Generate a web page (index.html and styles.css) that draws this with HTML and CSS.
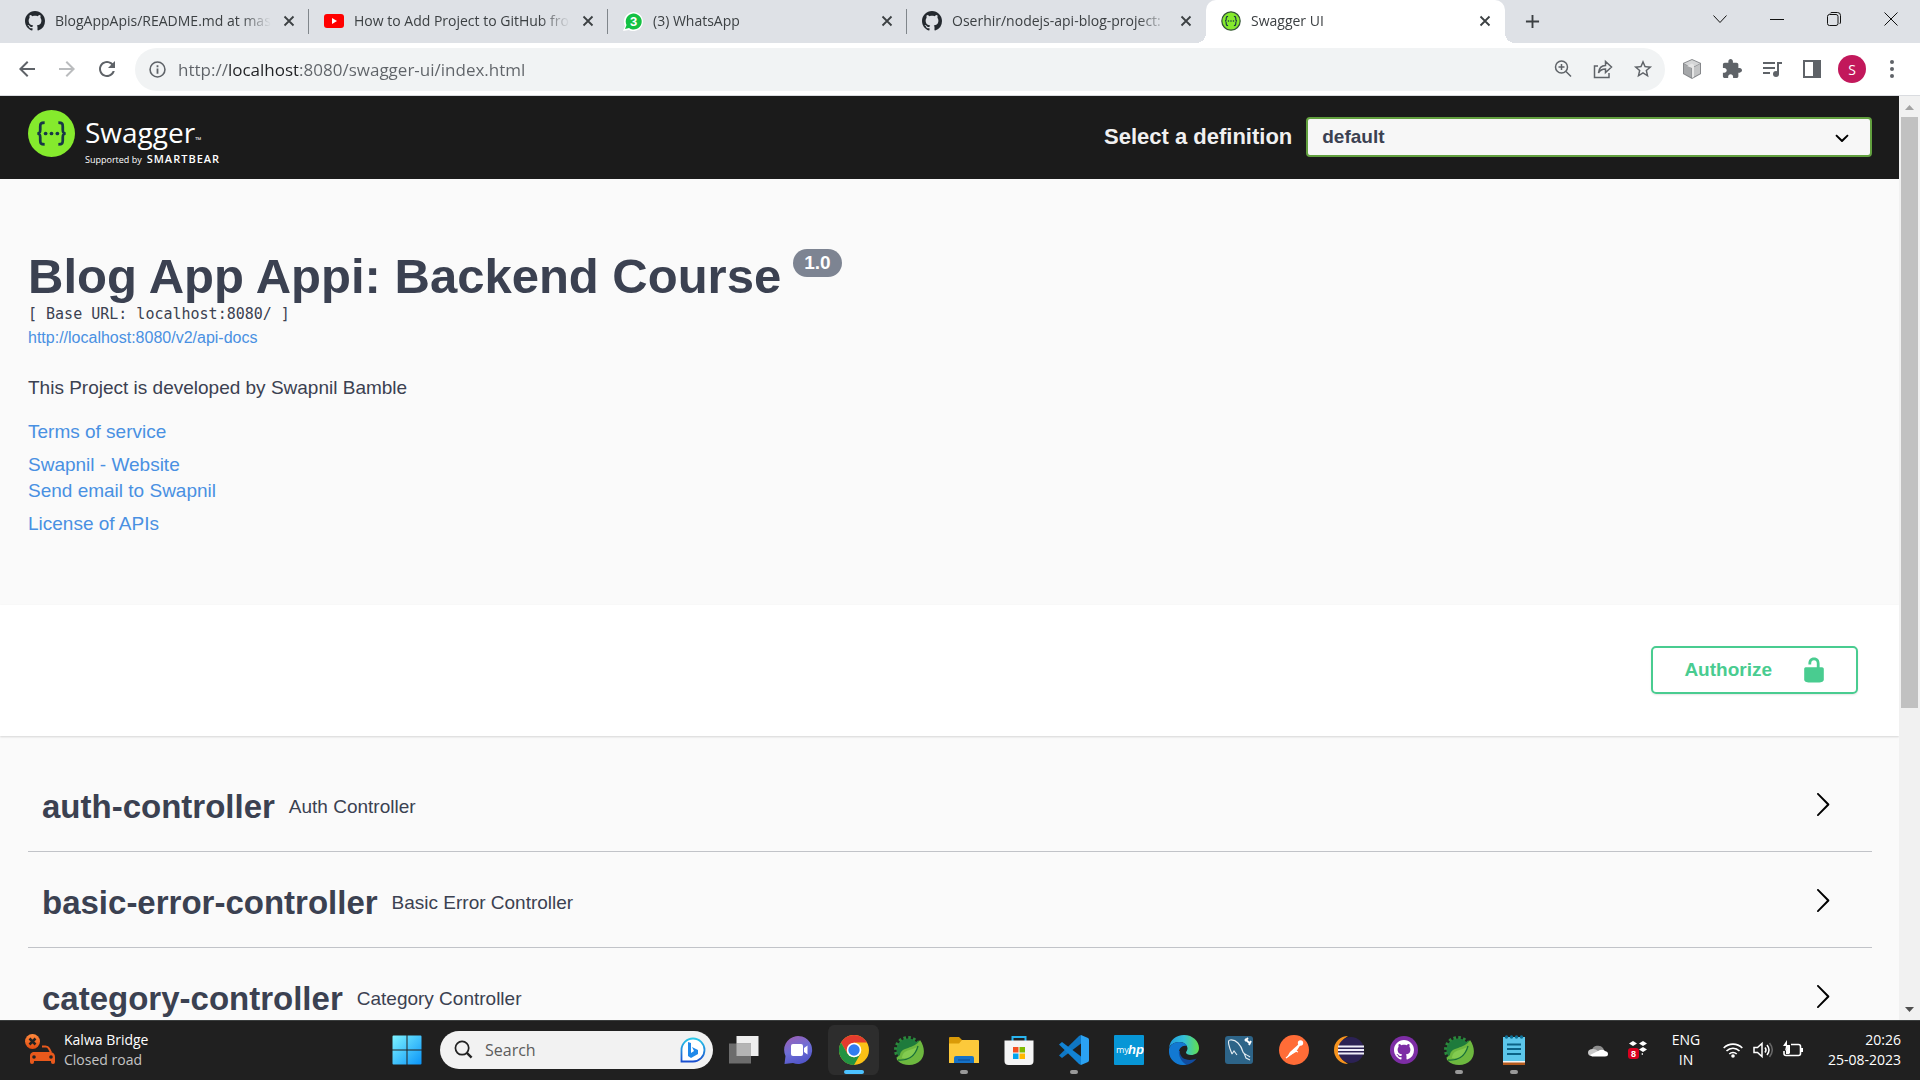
FILE: index.html
```html
<!DOCTYPE html>
<html lang="en">
<head>
<meta charset="utf-8">
<title>Swagger UI</title>
<link rel="stylesheet" href="styles.css">
</head>
<body>
<svg class="defs" aria-hidden="true">
  <symbol id="octocat" viewBox="0 0 16 16"><path d="M8 0C3.58 0 0 3.58 0 8c0 3.54 2.29 6.53 5.47 7.59.4.07.55-.17.55-.38 0-.19-.01-.82-.01-1.49-2.01.37-2.53-.49-2.69-.94-.09-.23-.48-.94-.82-1.13-.28-.15-.68-.52-.01-.53.63-.01 1.08.58 1.23.82.72 1.21 1.87.87 2.33.66.07-.52.28-.87.51-1.07-1.78-.2-3.64-.89-3.64-3.95 0-.87.31-1.59.82-2.15-.08-.2-.36-1.02.08-2.12 0 0 .67-.21 2.2.82.64-.18 1.32-.27 2-.27s1.36.09 2 .27c1.53-1.04 2.2-.82 2.2-.82.44 1.1.16 1.92.08 2.12.51.56.82 1.27.82 2.15 0 3.07-1.87 3.75-3.65 3.95.29.25.54.73.54 1.48 0 1.07-.01 1.93-.01 2.2 0 .21.15.46.55.38A8.01 8.01 0 0 0 16 8c0-4.42-3.58-8-8-8z"/></symbol>
  <symbol id="x" viewBox="0 0 12 12"><path d="M1.5 1.5l9 9M10.5 1.5l-9 9" fill="none" stroke="currentColor" stroke-width="1.8"/></symbol>
  <symbol id="braces" viewBox="0 0 48 48"><g fill="none" stroke="#173647" stroke-width="2.8"><path d="M17 13c-4 0-4.500 1-4.500 4v3c0 3-.5 4-3 4 2.500 0 3 1 3 4v3c0 3 .5 4 4.500 4M31 13c4 0 4.500 1 4.500 4v3c0 3 .5 4 3 4-2.500 0-3 1-3 4v3c0 3-.5 4-4.500 4"/></g><g fill="#173647"><circle cx="18" cy="24" r="1.900"/><circle cx="24" cy="24" r="1.900"/><circle cx="30" cy="24" r="1.900"/></g></symbol>
  <symbol id="arrow" viewBox="0 0 20 20"><path d="M13.250 10L6.109 2.580c-.268-.27-.268-.707 0-.979.268-.27.701-.27.969 0l7.830 7.908c.268.271.268.709 0 .979l-7.830 7.908c-.268.271-.701.27-.969 0-.268-.269-.268-.707 0-.979L13.250 10z"/></symbol>
  <symbol id="spring" viewBox="0 0 30 30">
    <circle cx="14" cy="15" r="11.500" fill="#1e7b3c"/><circle cx="14" cy="15" r="12.500" fill="none" stroke="#2b8a3c" stroke-width="3" stroke-dasharray="2.600 2.300"/>
    <path d="M26 5C31 12 31 20 27 25 21 32 9 31 4 26 1 23 4 22 6 20 7 11 20 15 26 5z" fill="#6db83f"/>
    <path d="M24 11C20 16 9 13 8 23c8 1 14-3 16-12z" fill="#82cb50"/><path d="M4 25c9 1 17-3 20-14" fill="none" stroke="#17703a" stroke-width="1.300"/>
  </symbol>
</svg>

<header class="tabstrip">
  <nav class="tabs" aria-label="Tabs">
    <div class="tab"><svg class="favicon dark"><use href="#octocat"/></svg><span class="tab-title">BlogAppApis/README.md at mas</span><button class="tab-close" aria-label="Close tab"><svg><use href="#x"/></svg></button></div>
    <div class="tab"><svg class="favicon" viewBox="0 0 20 20"><rect y="3" width="20" height="14" rx="3" fill="#f00"/><path d="M8 7l5 3-5 3z" fill="#fff"/></svg><span class="tab-title">How to Add Project to GitHub fro</span><button class="tab-close" aria-label="Close tab"><svg><use href="#x"/></svg></button></div>
    <div class="tab"><svg class="favicon" viewBox="0 0 20 20"><path d="M0 20l2-5A9.500 9.500 0 1 1 6 19z" fill="#fff"/><path d="M2 18l1.500-4A8 8 0 1 1 6 17z" fill="#13c143"/><text x="10.500" y="15" text-anchor="middle" class="badge-num">3</text></svg><span class="tab-title">(3) WhatsApp</span><button class="tab-close" aria-label="Close tab"><svg><use href="#x"/></svg></button></div>
    <div class="tab before-active"><svg class="favicon dark"><use href="#octocat"/></svg><span class="tab-title">Oserhir/nodejs-api-blog-project:</span><button class="tab-close" aria-label="Close tab"><svg><use href="#x"/></svg></button></div>
    <div class="tab active"><svg class="favicon" viewBox="0 0 48 48"><circle cx="24" cy="24" r="22" fill="#85ea2d" stroke="#35543a" stroke-width="3"/><use href="#braces"/></svg><span class="tab-title">Swagger UI</span><button class="tab-close" aria-label="Close tab"><svg><use href="#x"/></svg></button></div>
  </nav>
  <button class="new-tab" aria-label="New tab"><svg viewBox="0 0 16 16"><path d="M8 1v14M1 8h14" stroke="#3c4043" stroke-width="2"/></svg></button>
  <div class="window-controls">
    <button aria-label="Search tabs"><svg viewBox="0 0 14 14"><path d="M.5 3.500L7 10.500l6.500-7"/></svg></button>
    <button aria-label="Minimise"><svg viewBox="0 0 14 14"><path d="M0 7.500h14"/></svg></button>
    <button aria-label="Restore"><svg viewBox="0 0 14 14"><rect x=".5" y="2.500" width="10.500" height="11" rx="2"/><path d="M3 1.500Q3.500.5 5 .5h5.500q3 0 3 3V10q0 1.500-1 2"/></svg></button>
    <button aria-label="Close"><svg viewBox="0 0 14 14"><path d="M.5.5l13 13M13.500.5l-13 13"/></svg></button>
  </div>
</header>

<div class="toolbar">
  <div class="nav-buttons">
    <button aria-label="Back"><svg viewBox="0 0 24 24"><path fill="#5f6368" d="M20 11H7.830l5.590-5.590L12 4l-8 8 8 8 1.410-1.410L7.830 13H20v-2z"/></svg></button>
    <button aria-label="Forward"><svg viewBox="0 0 24 24"><path fill="#babcbe" d="M12 4l-1.410 1.410L16.170 11H4v2h12.170l-5.580 5.590L12 20l8-8z"/></svg></button>
    <button aria-label="Reload"><svg viewBox="0 0 24 24"><path fill="#5f6368" d="M17.650 6.350C16.200 4.900 14.210 4 12 4c-4.420 0-7.990 3.580-7.990 8s3.570 8 7.990 8c3.730 0 6.840-2.550 7.730-6h-2.080c-.82 2.330-3.040 4-5.650 4-3.310 0-6-2.690-6-6s2.690-6 6-6c1.660 0 3.140.69 4.220 1.780L13 11h7V4l-2.350 2.350z"/></svg></button>
  </div>
  <div class="omnibox">
    <svg class="info-icon" viewBox="0 0 16 16"><circle cx="8" cy="8" r="7" fill="none" stroke="#5f6368" stroke-width="1.500"/><path d="M8 7v5M8 4v1.800" stroke="#5f6368" stroke-width="1.700"/></svg>
    <input class="url" type="text" aria-label="Address" value="http://localhost:8080/swagger-ui/index.html">
    <button aria-label="Zoom"><svg viewBox="0 0 20 20" class="line"><circle cx="8.500" cy="8" r="6"/><path d="M13 12.500l5 5M8.500 5v6M5.500 8h6"/></svg></button>
    <button aria-label="Share"><svg viewBox="0 0 20 20" class="line"><path d="M5 7H1.500v11.500H16V14M5.500 14c.5-5 3-7.500 7-7.500V2.500l6 5.500-6 5.500V10c-3 0-5.500 1-7 4z"/></svg></button>
    <button aria-label="Bookmark"><svg viewBox="1 1 22 22"><path fill="#5f6368" d="M22 9.240l-7.190-.62L12 2 9.190 8.630 2 9.240l5.460 4.730L5.820 21 12 17.270 18.180 21l-1.630-7.030L22 9.240zM12 15.400l-3.760 2.270 1-4.280-3.320-2.880 4.380-.38L12 6.100l1.710 4.040 4.380.38-3.320 2.880 1 4.280L12 15.400z"/></svg></button>
  </div>
  <div class="extensions">
    <button aria-label="Cube extension"><svg viewBox="0 0 20 20"><path d="M10 0l9 4v11l-9 5-9-5V4z" fill="#85878a"/><path d="M10 1l8 3.500-8 4-8-4z" fill="#d5d6d7"/><path d="M2 5l7.500 4v9.500L2 14.500z" fill="#a5a7a9"/><path d="M10.500 9L18 5v9.500l-7.500 4z" fill="#c3c4c5"/><path d="M5 7l5-2.500L12 6v12l-2 1V9z" fill="#e6e6e6"/></svg></button>
    <button aria-label="Extensions"><svg viewBox="1 1 22 22"><path fill="#5f6368" d="M20.500 11H19V7c0-1.100-.9-2-2-2h-4V3.500C13 2.120 11.880 1 10.500 1S8 2.120 8 3.500V5H4c-1.100 0-1.990.9-1.990 2v3.800H3.500c1.490 0 2.700 1.210 2.700 2.700s-1.210 2.700-2.700 2.700H2V20c0 1.100.9 2 2 2h3.800v-1.500c0-1.490 1.210-2.700 2.700-2.700 1.490 0 2.700 1.210 2.700 2.700V22H17c1.100 0 2-.9 2-2v-4h1.500c1.380 0 2.500-1.120 2.500-2.500S21.880 11 20.500 11z"/></svg></button>
    <button aria-label="Media controls"><svg viewBox="0 0 20 20"><path d="M1 4h12M1 9h12M1 14h7M16 15V4h4" fill="none" stroke="#5f6368" stroke-width="2"/><circle cx="14" cy="15" r="3" fill="#5f6368"/></svg></button>
    <button aria-label="Side panel"><svg viewBox="0 0 20 20"><path fill="#5f6368" d="M1 1h18v18H1zM3 3v14h8V3z" fill-rule="evenodd"/></svg></button>
    <button class="avatar" aria-label="Profile">S</button>
    <button aria-label="Menu"><svg viewBox="0 0 20 20" fill="#5f6368"><circle cx="10" cy="3" r="2"/><circle cx="10" cy="10" r="2"/><circle cx="10" cy="17" r="2"/></svg></button>
  </div>
</div>

<div class="viewport">
  <main class="page">
    <div class="topbar">
      <a class="logo" href="#">
        <svg class="logo-mark" viewBox="0 0 48 48"><circle cx="24" cy="24" r="24" fill="#85ea2d"/><use href="#braces"/></svg>
        <span class="logo-text"><span class="logo-name">Swagger<span class="tm">™</span></span><span class="logo-by"><span>Supported by</span><b>SMARTBEAR</b></span></span>
      </a>
      <form class="definition">
        <label for="definition">Select a definition</label>
        <span class="select-wrap"><select id="definition"><option>default</option></select><svg class="select-arrow" viewBox="0 0 20 20"><path d="M13.418 7.859c.271-.268.709-.268.978 0 .27.268.272.701 0 .969l-3.908 3.830c-.27.268-.707.268-.979 0l-3.908-3.830c-.27-.267-.27-.701 0-.969.271-.268.709-.268.978 0L10 11l3.418-3.141z"/></svg></span>
      </form>
    </div>

    <section class="info">
      <h1>Blog App Appi: Backend Course<span class="version">1.0</span></h1>
      <pre class="base-url">[ Base URL: localhost:8080/ ]</pre>
      <a class="docs-link" href="#">http://localhost:8080/v2/api-docs</a>
      <p class="description">This Project is developed by Swapnil Bamble</p>
      <a href="#">Terms of service</a>
      <div class="contact"><a href="#">Swapnil - Website</a><a href="#">Send email to Swapnil</a></div>
      <a href="#">License of APIs</a>
    </section>

    <section class="auth"><button class="authorize"><span>Authorize</span><svg viewBox="0 0 20 20"><path d="M15.800 8H14V5.600C14 2.703 12.665 1 10 1 7.334 1 6 2.703 6 5.600V6h2v-.801C8 3.754 8.797 3 10 3c1.203 0 2 .754 2 2.199V8H4c-.553 0-1 .646-1 1.199V17c0 .549.428 1.139.951 1.307l1.197.387C5.672 18.861 6.550 19 7.100 19h5.800c.549 0 1.428-.139 1.951-.307l1.196-.387c.524-.167.953-.757.953-1.306V9.199C17 8.646 16.352 8 15.800 8z"/></svg></button></section>

    <section class="tags">
      <div class="tag"><h2>auth-controller</h2><p>Auth Controller</p><button aria-label="Expand auth-controller"><svg><use href="#arrow"/></svg></button></div>
      <div class="tag"><h2>basic-error-controller</h2><p>Basic Error Controller</p><button aria-label="Expand basic-error-controller"><svg><use href="#arrow"/></svg></button></div>
      <div class="tag"><h2>category-controller</h2><p>Category Controller</p><button aria-label="Expand category-controller"><svg><use href="#arrow"/></svg></button></div>
    </section>
  </main>
  <div class="scrollbar" aria-hidden="true">
    <svg viewBox="0 0 21 21"><path d="M6 14l4.500-5 4.500 5z" fill="#a3a3a3"/></svg>
    <div class="track"><div class="thumb"></div></div>
    <svg viewBox="0 0 21 21"><path d="M6 8l4.500 5L15 8z" fill="#505050"/></svg>
  </div>
</div>

<footer class="taskbar">
  <div class="news">
    <svg viewBox="0 0 30 30"><defs><linearGradient id="or" x2="0" y2="1"><stop stop-color="#ff8a3d"/><stop offset="1" stop-color="#e04a10"/></linearGradient></defs><circle cx="7.500" cy="7.500" r="7.500" fill="url(#or)"/><path d="M4.500 4.500l6 6M10.500 4.500l-6 6" stroke="#222" stroke-width="2.500"/><path d="M17 12.500h3.500q2.500 0 3.500 2l2 4" fill="none" stroke="#e9591c" stroke-width="2"/><path d="M8 18h18q4 1 4 5v5q0 2-2 2t-2-2v-1H9v1q0 2-2 2t-2-2v-6q0-3 3-4z" fill="#e9591c"/><circle cx="9" cy="23" r="1.800" fill="#222"/><circle cx="26" cy="23" r="1.800" fill="#222"/></svg>
    <div class="news-text"><span>Kalwa Bridge</span><span class="muted">Closed road</span></div>
  </div>
  <nav class="apps" aria-label="Taskbar">
    <button aria-label="Start"><svg viewBox="0 0 30 30"><defs><linearGradient id="wn" x2="1" y2="1"><stop stop-color="#7df3ff"/><stop offset="1" stop-color="#0a94f8"/></linearGradient></defs><path fill="url(#wn)" d="M.5 1.500q0-1 1-1h13v14H.5zM15.500.5h13q1 0 1 1v13h-14zM.5 15.500h14v14h-13q-1 0-1-1zM15.500 15.500h14v13q0 1-1 1h-13z"/></svg></button>
    <div class="search">
      <svg viewBox="0 0 20 20"><circle cx="8.500" cy="8.500" r="7" fill="none" stroke="#222" stroke-width="1.800"/><path d="M13.500 13.500l5 5" stroke="#222" stroke-width="2.500"/></svg>
      <input type="search" placeholder="Search" aria-label="Search">
      <svg class="bing" viewBox="0 0 26 26"><defs><linearGradient id="bg" x2="0" y2="1"><stop stop-color="#2ac8e8"/><stop offset="1" stop-color="#1a4fd0"/></linearGradient></defs><path d="M1.500 24.500V13A11.500 11.500 0 1 1 13 24.500z" fill="#fff" stroke="url(#bg)" stroke-width="1.800"/><path d="M8 5l3 1v10l3-2-2-4 6 3v4l-7 4-3-2z" fill="#2089ea"/></svg>
    </div>
    <button aria-label="Task view"><svg viewBox="0 0 30 30"><rect x="7.500" y="1" width="22" height="20" fill="#eee"/><rect y="8.500" width="22" height="20" fill="#6c6c6c"/><rect x="7.500" y="8.500" width="14.500" height="12.500" fill="#b4b4b4"/></svg></button>
    <button aria-label="Chat"><svg viewBox="0 0 30 30"><defs><linearGradient id="ch" x1=".2" x2=".6" y2="1"><stop stop-color="#9a5fb5"/><stop offset=".5" stop-color="#6f6fd6"/><stop offset="1" stop-color="#5054c8"/></linearGradient></defs><path d="M.5 29l1-8A14 14 0 1 1 9 28z" fill="url(#ch)"/><rect x="7" y="9" width="12" height="12" rx="2" fill="#fff"/><path d="M20 13l3.500-2.500v9L20 17z" fill="#fff"/></svg></button>
    <button class="current" aria-label="Chrome"><svg viewBox="0 0 30 30"><circle cx="15" cy="15" r="15" fill="#fbc116"/><path d="M15 0a15 15 0 0 1 13 7.500H15L8.500 18.700 2 7.500A15 15 0 0 1 15 0z" fill="#e33b2e"/><path d="M2 7.500A15 15 0 0 0 15 30l6.500-11.300-6.500 3.800-6.500-3.800z" fill="#229342"/><circle cx="15" cy="15" r="7.300" fill="#fff"/><circle cx="15" cy="15" r="5.700" fill="#2f7cf0"/></svg></button>
    <button aria-label="Spring Tool Suite"><svg><use href="#spring"/></svg></button>
    <button class="running" aria-label="File Explorer"><svg viewBox="0 0 30 30"><path d="M0 3q0-1 1-1h9l3 3v4H0z" fill="#d99a08"/><path d="M0 8.500h10L13 5h16q1 0 1 1v22H0z" fill="#fcc93b"/><path d="M5 28v-5q0-2 2-2h16q2 0 2 2v5z" fill="#1572c8"/><path d="M9 25h12" stroke="#0c4f99" stroke-width="1.200"/></svg></button>
    <button aria-label="Microsoft Store"><svg viewBox="0 0 30 30"><path d="M8.500 6V2h13v4" fill="none" stroke="#29b5f0" stroke-width="2"/><path d="M.5 5.500h29V26q0 4-4 4h-21q-4 0-4-4z" fill="#f5f5f5"/><path d="M9 12h5.500v5.500H9z" fill="#f25022"/><path d="M15.500 12H21v5.500h-5.500z" fill="#7fba00"/><path d="M9 18.500h5.500V24H9z" fill="#00a4ef"/><path d="M15.500 18.500H21V24h-5.500z" fill="#ffb900"/></svg></button>
    <button class="running" aria-label="Visual Studio Code"><svg viewBox="0 0 30 30"><path d="M22 0v8.500L3 23l-3-2.500L20 1z" fill="#0f77c4"/><path d="M22 30v-8.500L3 7 0 9.500 20 29z" fill="#1283d4"/><path d="M22 0l7 3q1 .5 1 2v20q0 1.500-1 2l-7 3z" fill="#2ba2f2"/></svg></button>
    <button aria-label="myHP"><svg viewBox="0 0 30 30"><rect width="30" height="30" rx="1" fill="#0796d6"/><text x="2" y="18" class="hp-my">my</text><text x="14" y="19" class="hp-hp">hp</text></svg></button>
    <button aria-label="Edge"><svg viewBox="0 0 30 30"><defs><linearGradient id="ed"><stop stop-color="#1f9de0"/><stop offset=".5" stop-color="#34c0d8"/><stop offset="1" stop-color="#63e04c"/></linearGradient></defs><path d="M0 15A15 15 0 0 0 15 30c6 0 10-3 12.500-6.500C20 27 10 24 11 16z" fill="#114c9f"/><path d="M0 13C1 5 7 0 15 0c9 0 15 6.500 15 13 0 5-4 7-8 7-3 0-5-1-5-2.500 0-1 1.500-2 1.500-4C18.500 10 15 7 11 7 5 7 1 10 0 13z" fill="url(#ed)"/><path d="M0 14c1-4 5-7 10-7 4 0 7 1.500 8 4-5-1.500-9 3-8 8 1 6 5 10 8 10.500C8 32-1 25 0 14z" fill="#1279d2"/></svg></button>
    <button aria-label="MySQL Workbench"><svg viewBox="0 0 30 30"><rect x="1" y="1" width="28" height="28" rx="3" fill="#2d6488"/><path d="M8 19C5 12 3 5 6 5c6-1 11 5 13 12 0 2 5 3 7 5M8 19l2-3 3 4M20 18l2 5 4 2" fill="none" stroke="#e5edf2" stroke-width="1.100"/><path d="M21 4l5 4.500M24 3l-3 3M27 6l-2 4" stroke="#fff" stroke-width="1.800"/></svg></button>
    <button aria-label="Postman"><svg viewBox="0 0 30 30"><circle cx="15" cy="15" r="15" fill="#ff6c37"/><path d="M21 8L11 17l-3 5 9-5 5-8z" fill="#fff"/><circle cx="21.500" cy="8" r="2.700" fill="#fff"/><path d="M7 23l8-6M14 15l5 2" stroke="#fff" stroke-width="1.300"/></svg></button>
    <button aria-label="Eclipse"><svg viewBox="0 0 30 30"><path d="M14 1A14 14 0 0 0 14 29 16 16 0 0 1 14 1z" fill="#f7941e"/><circle cx="17" cy="15" r="13" fill="#2c2255"/><path d="M4 11.500h26M4 15h26M4 18.500h26" stroke="#f0eefa" stroke-width="1.800"/></svg></button>
    <button aria-label="GitHub Desktop"><svg viewBox="0 0 30 30"><circle cx="15" cy="15" r="14" fill="#7d2da5"/><svg x="5" y="5" width="20" height="20" fill="#fff"><use href="#octocat"/></svg></svg></button>
    <button class="running" aria-label="Spring Tool Suite 4"><svg><use href="#spring"/></svg></button>
    <button class="running" aria-label="Notepad"><svg viewBox="0 0 30 30"><rect x="4" y="26" width="22" height="4" fill="#b45a1d"/><rect x="4" y="25" width="22" height="2.500" fill="#f3f3f3"/><rect x="4" y="2" width="22" height="24" fill="#5cc6ea"/><path d="M8 9.500h14M8 14h14M8 19h14" stroke="#0b6286" stroke-width="1.800"/><g fill="#0e7095"><circle cx="7.500" cy="2" r="1.700"/><circle cx="12.500" cy="2" r="1.700"/><circle cx="17.500" cy="2" r="1.700"/><circle cx="22.500" cy="2" r="1.700"/></g></svg></button>
  </nav>
  <div class="tray">
    <svg class="cloud" viewBox="0 0 20 20"><path d="M4 10a6 5 0 0 1 11-2l2 4H3z" fill="#8d8d8d"/><path d="M4 16q-4 0-4-3.500T5 9q3 0 5 2l4 5z" fill="#c9c9c9"/><path d="M2 15l10-5q3-1 5 1 3 .5 3 3t-3 2.500H4z" fill="#fff"/></svg>
    <svg class="dropbox" viewBox="0 0 20 20"><path fill="#fff" d="M5 1l4 2.500L5 6 1 3.500zM15 1l4 2.500L15 6l-4-2.500zM15 7l4 2.500-4 2.500-4-2.500zM13 14l2-1v2z"/><rect y="8" width="11" height="11" rx="3" fill="#d9001f"/><text x="5.500" y="17" text-anchor="middle" class="badge-num small">8</text></svg>
    <div class="lang"><span>ENG</span><span>IN</span></div>
    <svg class="status" viewBox="0 0 20 20"><g fill="none" stroke="#fff" stroke-width="1.600"><path d="M.7 8a13 13 0 0 1 18.600 0M3.500 11a9 9 0 0 1 13 0M6.300 14a5.200 5.200 0 0 1 7.400 0"/></g><circle cx="10" cy="16" r="1.800" fill="#fff"/></svg>
    <svg class="status" viewBox="0 0 20 20"><g fill="none" stroke="#fff" stroke-width="1.500"><path d="M1 7.500h3.500L9 3.500v13l-4.500-4H1zM12 7.500q2 2.500 0 5M14 5q4 5 0 10"/><path d="M16.500 3q5.500 7 0 14" stroke="#666"/></g></svg>
    <svg class="status" viewBox="0 0 20 20"><path d="M8 4.500h7.500q2 0 2 2v7q0 2-2 2H3q-2 0-2-2V11" fill="none" stroke="#fff" stroke-width="1.600"/><path d="M18 8h2v4h-2zM3 14v-4l4-5v8l-1 1zM4 0L0 6h3L2 11l5-6H4z" fill="#fff"/></svg>
    <div class="clock"><span>20:26</span><span>25-08-2023</span></div>
  </div>
</footer>
</body>
</html>
```
FILE: styles.css
```css
* { box-sizing: border-box; }

body {
  margin: 0;
  height: 100vh;
  display: grid;
  grid-template-rows: 43px 53px minmax(0, 1fr) 60px;
  overflow: hidden;
  background: #fafafa;
  color: #3b4151;
  font-family: "Liberation Sans", Arial, sans-serif;
}

button { border: 0; padding: 0; background: none; font: inherit; color: inherit; }
input { border: 0; outline: 0; padding: 0; background: none; font: inherit; min-width: 0; }
h1, h2, p, pre { margin: 0; }
svg { display: block; flex: none; }
.defs { position: absolute; width: 0; height: 0; }

.tabstrip, .toolbar, .taskbar { font-family: "Open Sans", "Noto Sans", sans-serif; }

/* Tab strip */
.tabstrip { display: flex; align-items: stretch; background: #dee1e6; padding: 0 1px 0 10px; }
.tabs { display: flex; flex: 0 1 1495px; min-width: 0; }
.tab {
  flex: 1 1 0;
  min-width: 0;
  display: flex;
  align-items: center;
  gap: 10px;
  padding: 0 12px 1px 15px;
  background: linear-gradient(#80868b, #80868b) right 9px / 1px 25px no-repeat;
  background-position: right 9px;
}
.tab.before-active { background: none; border-radius: 0 0 8px 0; }
.tab.active { position: relative; background: #fff; border-radius: 10px 10px 0 0; }
.tab.active::before, .tab.active::after {
  content: "";
  position: absolute;
  bottom: 0;
  width: 10px;
  height: 10px;
}
.tab.active::before { left: -10px; background: radial-gradient(circle at 0 0, transparent 10px, #fff 10px); }
.tab.active::after { right: -10px; background: radial-gradient(circle at 100% 0, transparent 10px, #fff 10px); }
.favicon { width: 20px; height: 20px; }
.favicon.dark { fill: #24292f; }
.tab-title {
  flex: 1;
  overflow: hidden;
  white-space: nowrap;
  font-size: 14px;
  line-height: 20px;
  color: #3c4043;
  mask-image: linear-gradient(to right, #000 calc(100% - 30px), transparent);
}
.tab-close { width: 16px; height: 20px; display: grid; place-items: center; color: #3c4043; }
.tab-close svg { width: 12px; height: 12px; }
.badge-num { font: bold 13px "Liberation Sans", sans-serif; fill: #fff; }
.badge-num.small { font-size: 9px; }
.new-tab { width: 54px; display: grid; place-items: center; }
.new-tab svg { width: 15px; height: 15px; }
.window-controls { display: flex; margin-left: auto; }
.window-controls button { width: 57px; height: 37px; display: grid; place-items: center; }
.window-controls svg { width: 14px; height: 14px; fill: none; stroke: #111; }

/* Toolbar */
.toolbar {
  display: flex;
  align-items: center;
  background: #fff;
  border-bottom: 1px solid #dadce0;
  padding: 0 8px 0 7px;
}
.nav-buttons { display: flex; margin-right: 8px; }
.nav-buttons button { width: 40px; height: 40px; display: grid; place-items: center; }
.nav-buttons svg { width: 24px; height: 24px; }
.omnibox {
  flex: 1;
  min-width: 0;
  height: 43px;
  display: flex;
  align-items: center;
  border-radius: 22px;
  background: #f1f3f4;
  padding: 0 2px 0 14px;
}
.info-icon { width: 17px; height: 17px; }
.url {
  flex: 1;
  height: 32px;
  margin-left: 12px;
  font-size: 17px;
  background: linear-gradient(to right, #5f6368 51px, #202124 51px 120px, #5f6368 120px);
  background-clip: text;
  -webkit-text-fill-color: transparent;
}
.omnibox button, .extensions button { width: 40px; height: 40px; display: grid; place-items: center; }
.omnibox button svg, .extensions svg { width: 20px; height: 20px; }
.line { fill: none; stroke: #5f6368; stroke-width: 1.5px; }
.extensions { display: flex; align-items: center; margin-left: 7px; }
.extensions .avatar {
  width: 28px;
  height: 28px;
  margin: 0 6px;
  border-radius: 50%;
  background: #c2185b;
  color: #fff;
  font-size: 14px;
}

/* Document viewport */
.viewport { display: flex; min-height: 0; }
.page { flex: 1; min-width: 0; overflow: hidden; }
.scrollbar { width: 21px; display: flex; flex-direction: column; background: #f1f1f1; }
.scrollbar svg { width: 21px; height: 21px; }
.track { flex: 1; padding: 0 2px; }
.thumb { height: 67%; background: #c1c1c1; }

.topbar {
  display: flex;
  align-items: center;
  justify-content: space-between;
  height: 83px;
  padding: 0 27px 2px 28px;
  background: #1b1b1b;
}
.logo { display: flex; align-self: flex-start; gap: 10px; padding-top: 14px; color: #fff; text-decoration: none; font-family: "Open Sans", sans-serif; }
.logo-mark { width: 47px; height: 47px; }
.logo-text { display: flex; flex-direction: column; padding-top: 7px; }
.logo-name { height: 36px; font-size: 28px; line-height: 30px; }
.tm { font-size: 8px; }
.logo-by { display: flex; align-items: baseline; gap: 5px; font-size: 9px; line-height: 12px; }
.logo-by b { font-size: 11px; font-weight: 600; letter-spacing: 1px; }
.definition { display: flex; align-items: center; gap: 14px; flex: 0 1 768px; }
.definition label { font-size: 22px; font-weight: bold; color: #f0f0f0; white-space: nowrap; }
.select-wrap { position: relative; flex: 1; }
.select-wrap select {
  appearance: none;
  display: block;
  width: 100%;
  height: 40px;
  padding: 0 14px 1px;
  border: 2px solid #62a03f;
  border-radius: 4px;
  background: #f7f7f7;
  color: #3b4151;
  font: bold 19px "Liberation Sans", Arial, sans-serif;
}
.select-arrow { position: absolute; right: 16px; top: 7px; width: 28px; height: 28px; pointer-events: none; }

.info {
  display: flex;
  flex-direction: column;
  align-items: flex-start;
  padding: 69px 28px 68px;
  font-size: 19px;
  line-height: 26px;
}
.info a { color: #4990e2; text-decoration: none; }
.info h1 { display: flex; align-items: flex-start; gap: 12px; font-size: 49px; line-height: 56px; }
.version {
  margin-top: 1px;
  padding: 0 11px;
  border-radius: 14px;
  background: #7d8492;
  color: #fff;
  font-size: 19px;
  line-height: 28px;
}
.base-url { font: 15px/21px "DejaVu Sans Mono", monospace; }
.info .docs-link { font-size: 16px; }
.description { margin: 24px 0 18px; }
.contact { display: flex; flex-direction: column; margin: 7px 0; }

.auth {
  display: flex;
  justify-content: flex-end;
  padding: 41px 41px 42px;
  background: #fff;
  box-shadow: 0 1px 2px rgba(0, 0, 0, .15);
}
.authorize {
  display: flex;
  align-items: center;
  gap: 28px;
  height: 48px;
  padding: 0 28px 1px 31px;
  border: 2px solid #49cc90;
  border-radius: 5px;
  box-shadow: 0 1px 2px rgba(0, 0, 0, .1);
  color: #49cc90;
  font-size: 19px;
  font-weight: bold;
}
.authorize svg { width: 28px; height: 28px; fill: #49cc90; }

.tags { padding: 20px 27px 0 28px; }
.tag {
  display: flex;
  align-items: center;
  gap: 14px;
  height: 96px;
  padding: 2px 36px 0 14px;
  border-bottom: 1px solid #c1c3c8;
}
.tag h2 { font-size: 33px; line-height: 40px; padding-top: 4px; }
.tag p { flex: 1; font-size: 19px; line-height: 24px; padding-top: 4px; }
.tag svg { width: 27px; height: 27px; fill: #000; }

/* Taskbar */
.taskbar {
  display: grid;
  grid-template-columns: 379px minmax(0, 1fr) auto;
  align-items: center;
  padding-bottom: 1px;
  background: #202020;
  box-shadow: inset 0 1px #3a3d3d;
  color: #fff;
  font-size: 14px;
  line-height: 20px;
}
.news { display: flex; gap: 9px; padding-left: 25px; }
.news svg { width: 30px; height: 30px; margin-top: 4px; }
.news-text, .lang, .clock { display: flex; flex-direction: column; }
.muted { color: #c4c4c4; }
.apps { display: flex; align-items: center; }
.apps button { position: relative; width: 55px; height: 50px; display: grid; place-items: center; }
.apps button > svg { width: 30px; height: 30px; }
.apps button.current { background: #2d2d2d; background-clip: content-box; padding: 0 2px; border-radius: 8px; }
.current::after, .running::after {
  content: "";
  position: absolute;
  bottom: 1px;
  left: 50%;
  width: 8px;
  height: 4px;
  margin-left: -4px;
  border-radius: 2px;
  background: #999;
}
.current::after { width: 20px; margin-left: -10px; background: #4cc2ff; }
.search {
  display: flex;
  align-items: center;
  width: 273px;
  height: 38px;
  margin: 0 3px 0 6px;
  padding: 0 7px 0 14px;
  gap: 12px;
  border-radius: 19px;
  background: #f2f2f2;
}
.search svg { width: 19px; height: 19px; }
.search .bing { width: 26px; height: 26px; }
.search input { flex: 1; font-size: 16px; color: #222; }
.search input::placeholder { color: #5c5c5c; opacity: 1; }
.hp-my { font: 9px "Open Sans", sans-serif; fill: #fff; }
.hp-hp { font: italic bold 13px "Liberation Sans", sans-serif; fill: #fff; }
.tray { display: flex; align-items: center; padding-right: 19px; }
.tray .status { width: 20px; height: 20px; margin-right: 10px; }
.cloud { width: 20px; height: 20px; margin-right: 20px; }
.dropbox { width: 20px; height: 20px; margin-right: 23px; }
.lang { width: 30px; margin-right: 22px; align-items: center; }
.clock { width: 88px; align-items: flex-end; white-space: nowrap; }
```
